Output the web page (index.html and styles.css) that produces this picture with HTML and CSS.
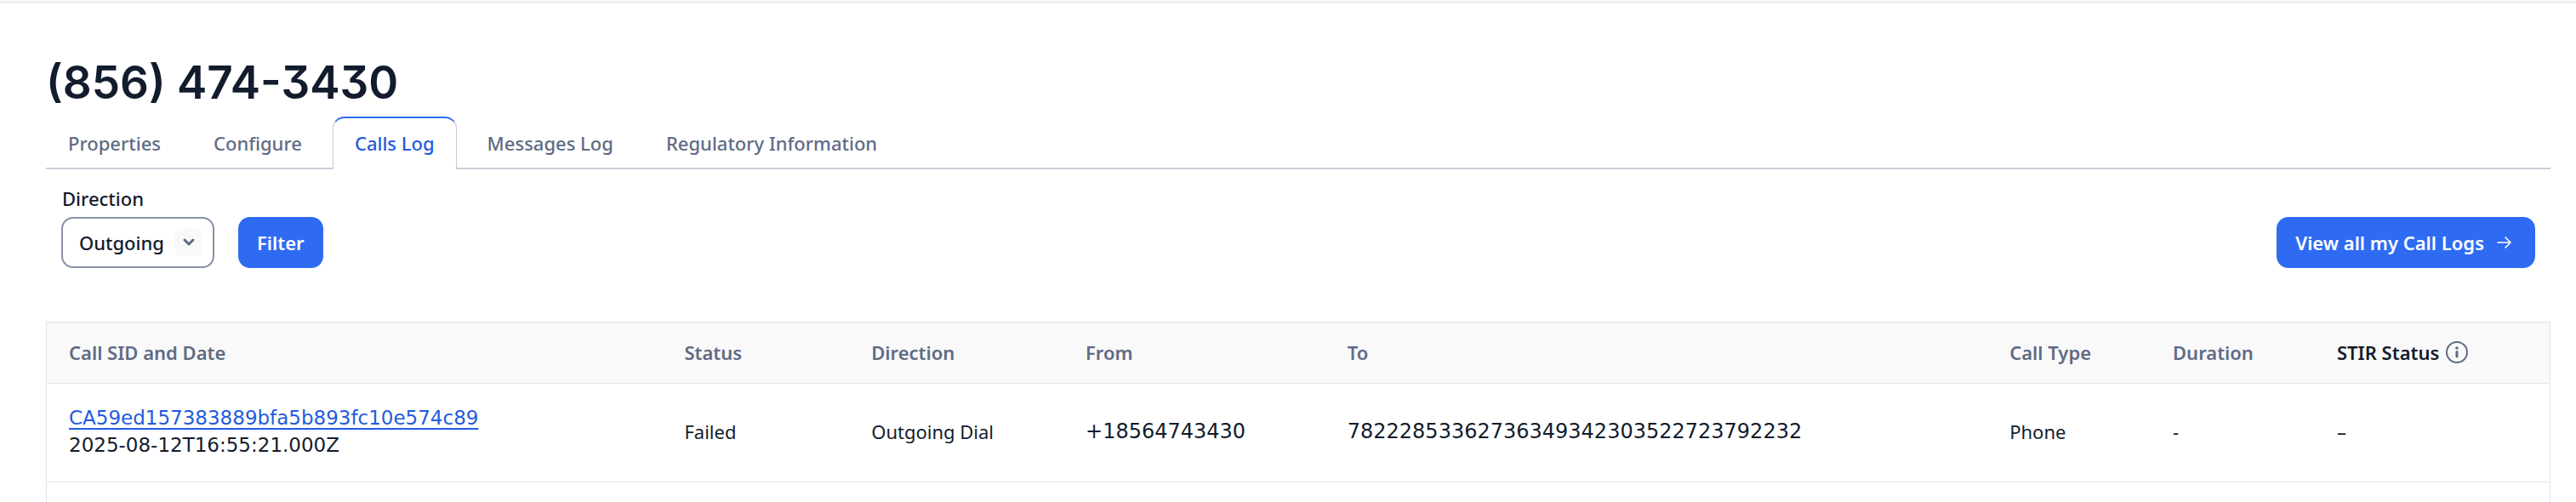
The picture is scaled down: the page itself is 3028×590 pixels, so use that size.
FILE: index.html
```html
<!DOCTYPE html>
<html lang="en">
<head>
<meta charset="utf-8">
<title>(856) 474-3430 – Calls Log</title>
<link rel="stylesheet" href="styles.css">
</head>
<body>
<div class="topbar"></div>
<main class="page">
  <h1 class="title">(856) 474-3430</h1>
  <nav class="tabs">
    <a class="tab" href="#properties">Properties</a>
    <a class="tab" href="#configure">Configure</a>
    <a class="tab tab-active" href="#calls" aria-current="page">Calls Log</a>
    <a class="tab" href="#messages">Messages Log</a>
    <a class="tab" href="#regulatory">Regulatory Information</a>
  </nav>
  <form class="filters">
    <div class="field">
      <label class="label" for="direction">Direction</label>
      <div class="select-wrap">
        <select class="select" id="direction">
          <option>Outgoing</option>
          <option>Incoming</option>
        </select>
        <span class="chevron">
          <svg width="16" height="12" viewBox="0 0 16 12" fill="none" stroke="#606b85" stroke-width="3" stroke-linecap="round" stroke-linejoin="round"><path d="M3 3l5 5 5-5"/></svg>
        </span>
      </div>
    </div>
    <button class="button" type="button">Filter</button>
    <button class="button button-end" type="button">View all my Call Logs
      <svg class="arrow" width="20" height="18" viewBox="0 0 20 18" fill="none" stroke="currentColor" stroke-width="1.600" stroke-linecap="round" stroke-linejoin="round"><path d="M2 9h15M11 3l6 6-6 6"/></svg>
    </button>
  </form>
  <div class="table-frame">
    <table class="table">
      <colgroup>
        <col class="c-sid"><col class="c-status"><col class="c-direction"><col class="c-from"><col class="c-to"><col class="c-type"><col class="c-duration"><col class="c-stir">
      </colgroup>
      <thead>
        <tr>
          <th>Call SID and Date</th>
          <th>Status</th>
          <th>Direction</th>
          <th>From</th>
          <th>To</th>
          <th>Call Type</th>
          <th>Duration</th>
          <th class="strong"><span class="with-icon">STIR Status
            <svg width="26" height="26" viewBox="0 0 26 26" fill="none" stroke="#606b85" stroke-width="2"><circle cx="13" cy="13" r="12"/><path d="M13 12.500v5.500" stroke-width="3" stroke-linecap="round"/><circle cx="13" cy="8" r="1.800" fill="#606b85" stroke="none"/></svg></span></th>
        </tr>
      </thead>
      <tbody>
        <tr>
          <td class="sid"><a class="link" href="#call">CA59ed157383889bfa5b893fc10e574c89</a><br>2025-08-12T16:55:21.000Z</td>
          <td>Failed</td>
          <td>Outgoing Dial</td>
          <td class="number">+18564743430</td>
          <td class="number">78222853362736349342303522723792232</td>
          <td>Phone</td>
          <td>-</td>
          <td>–</td>
        </tr>
      </tbody>
    </table>
  </div>
</main>
</body>
</html>
```
FILE: styles.css
```css
* { box-sizing: border-box; }

body {
  margin: 0;
  min-height: 100vh;
  display: flex;
  flex-direction: column;
  background: #fff;
  color: #121c2d;
  font-family: "Noto Sans", sans-serif;
  font-size: 22px;
  line-height: 32px;
}

.topbar {
  height: 4px;
  background: #f9f9fa;
  border-bottom: 2px solid #eeeff2;
}

.page {
  flex: 1;
  display: flex;
  flex-direction: column;
  padding: 60px 30px 0 54px;
}

.title {
  margin: 0;
  font-family: Inter, sans-serif;
  font-size: 53px;
  line-height: 66px;
  font-weight: 600;
  font-feature-settings: "cv09";
}

.tabs {
  display: flex;
  gap: 10px;
  margin-top: 7px;
  border-bottom: 2px solid #cacdd8;
}

.tab {
  padding: 13px 25px 14px;
  margin-bottom: -2px;
  border: 1px solid transparent;
  border-top-width: 2px;
  color: #606b85;
  font-weight: 500;
  text-decoration: none;
}

.tab-active {
  background: #fff;
  border-color: #2e6bf2 #cacdd8 #fff;
  border-radius: 14px 14px 0 0;
  color: #1f5bdd;
}

.filters {
  display: flex;
  align-items: flex-end;
  gap: 28px;
  padding: 18px 18px 0;
}

.field {
  display: flex;
  flex-direction: column;
  gap: 6px;
}

.label {
  padding-left: 1px;
  font-weight: 500;
}

.select-wrap { position: relative; }

.select {
  appearance: none;
  display: block;
  width: 180px;
  height: 60px;
  padding: 0 48px 0 19px;
  border: 2px solid #8891aa;
  border-radius: 14px;
  background: #fff;
  color: inherit;
  font: inherit;
  font-weight: 500;
}

.chevron {
  position: absolute;
  right: 14px;
  top: 14px;
  width: 32px;
  height: 32px;
  display: grid;
  place-items: center;
  border-radius: 6px;
  background: #f9f9f9;
  pointer-events: none;
}

.button {
  display: inline-flex;
  align-items: center;
  gap: 14px;
  height: 60px;
  padding: 0 22px;
  border: 0;
  border-radius: 14px;
  background: #2e6bf2;
  color: #fff;
  font: inherit;
  font-weight: 600;
}

.button-end {
  margin-left: auto;
  padding-right: 26px;
}

.table-frame {
  flex: 1;
  margin-top: 63px;
  border: 1px solid #e1e3ea;
  border-bottom: 0;
}

.table {
  width: 100%;
  table-layout: fixed;
  border-collapse: collapse;
}

.c-sid { width: 24.590%; }
.c-status { width: 7.470%; }
.c-direction { width: 8.560%; }
.c-from { width: 10.460%; }
.c-to { width: 26.460%; }
.c-type { width: 6.520%; }
.c-duration { width: 6.560%; }
.c-stir { width: 9.380%; }

.table th,
.table td {
  padding: 19px 0 20px 26px;
  border-bottom: 1px solid #e1e3ea;
  text-align: left;
  white-space: nowrap;
}

.table th {
  background: #f9f9f9;
  color: #606b85;
  font-weight: 600;
}

.table td { padding: 24px 0 27px 26px; }

.table th.strong { color: #121c2d; }

.with-icon {
  display: inline-flex;
  align-items: center;
  gap: 8px;
}

.table .sid,
.table .number {
  font-family: "DejaVu Sans", sans-serif;
}

.table .sid { font-size: 23px; }

.table .number { font-size: 24px; }

.link {
  color: #1f5bdd;
  text-decoration-thickness: 2px;
  text-underline-offset: 4px;
}
```
